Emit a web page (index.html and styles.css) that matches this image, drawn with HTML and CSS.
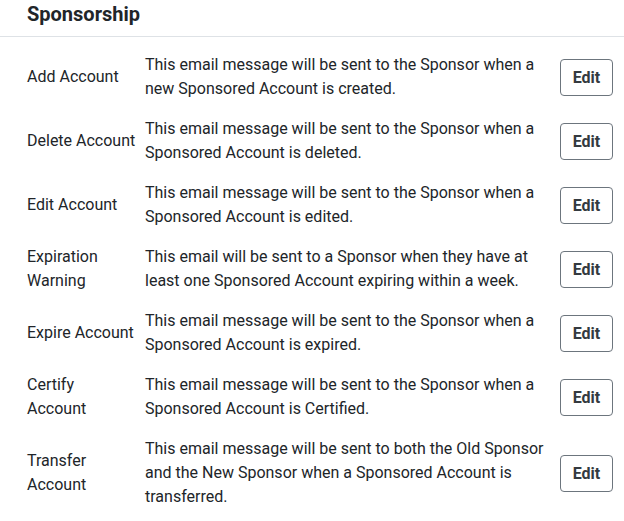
FILE: index.html
```html
<!DOCTYPE html>
<html lang="en">
<head>
  <meta charset="UTF-8">
  <title>Sponsorship</title>
  <link rel="stylesheet" href="styles.css">
</head>
<body>
  <div class="section">
    <h2 class="section-title">Sponsorship</h2>
    <div class="rows">
      <div class="row">
        <div class="label">Add Account</div>
        <div class="desc">This email message will be sent to the Sponsor when a new Sponsored Account is created.</div>
        <button class="edit-btn">Edit</button>
      </div>
      <div class="row">
        <div class="label">Delete Account</div>
        <div class="desc">This email message will be sent to the Sponsor when a Sponsored Account is deleted.</div>
        <button class="edit-btn">Edit</button>
      </div>
      <div class="row">
        <div class="label">Edit Account</div>
        <div class="desc">This email message will be sent to the Sponsor when a Sponsored Account is edited.</div>
        <button class="edit-btn">Edit</button>
      </div>
      <div class="row">
        <div class="label">Expiration Warning</div>
        <div class="desc">This email will be sent to a Sponsor when they have at least one Sponsored Account expiring within a week.</div>
        <button class="edit-btn">Edit</button>
      </div>
      <div class="row">
        <div class="label">Expire Account</div>
        <div class="desc">This email message will be sent to the Sponsor when a Sponsored Account is expired.</div>
        <button class="edit-btn">Edit</button>
      </div>
      <div class="row">
        <div class="label">Certify Account</div>
        <div class="desc">This email message will be sent to the Sponsor when a Sponsored Account is Certified.</div>
        <button class="edit-btn">Edit</button>
      </div>
      <div class="row">
        <div class="label">Transfer Account</div>
        <div class="desc">This email message will be sent to both the Old Sponsor and the New Sponsor when a Sponsored Account is transferred.</div>
        <button class="edit-btn">Edit</button>
      </div>
    </div>
  </div>
</body>
</html>
```

FILE: styles.css
```css
body {
  margin: 0;
  font-family: Roboto, "Liberation Sans", sans-serif;
  background-color: #fff;
  color: #212529;
}
.section-title {
  margin: 0;
  padding: 2px 27px 0;
  height: 34px;
  font-size: 20px;
  font-weight: 700;
  line-height: 24px;
  border-bottom: 1px solid #dee2e6;
}
.rows {
  padding: 8px 11px 0 27px;
}
.row {
  display: grid;
  grid-template-columns: 118px 1fr auto;
  align-items: center;
  padding: 8px 0;
  font-size: 16px;
  line-height: 24px;
}
.label {
  width: 110px;
  color: #212529;
}
.desc {
  padding-right: 12px;
  color: #212529;
}
.edit-btn {
  width: 53px;
  height: 37px;
  padding: 0;
  font-family: inherit;
  font-size: 16px;
  font-weight: 700;
  color: #343a40;
  background-color: #fff;
  border: 1px solid #6c757d;
  border-radius: 4px;
  cursor: pointer;
}
```
